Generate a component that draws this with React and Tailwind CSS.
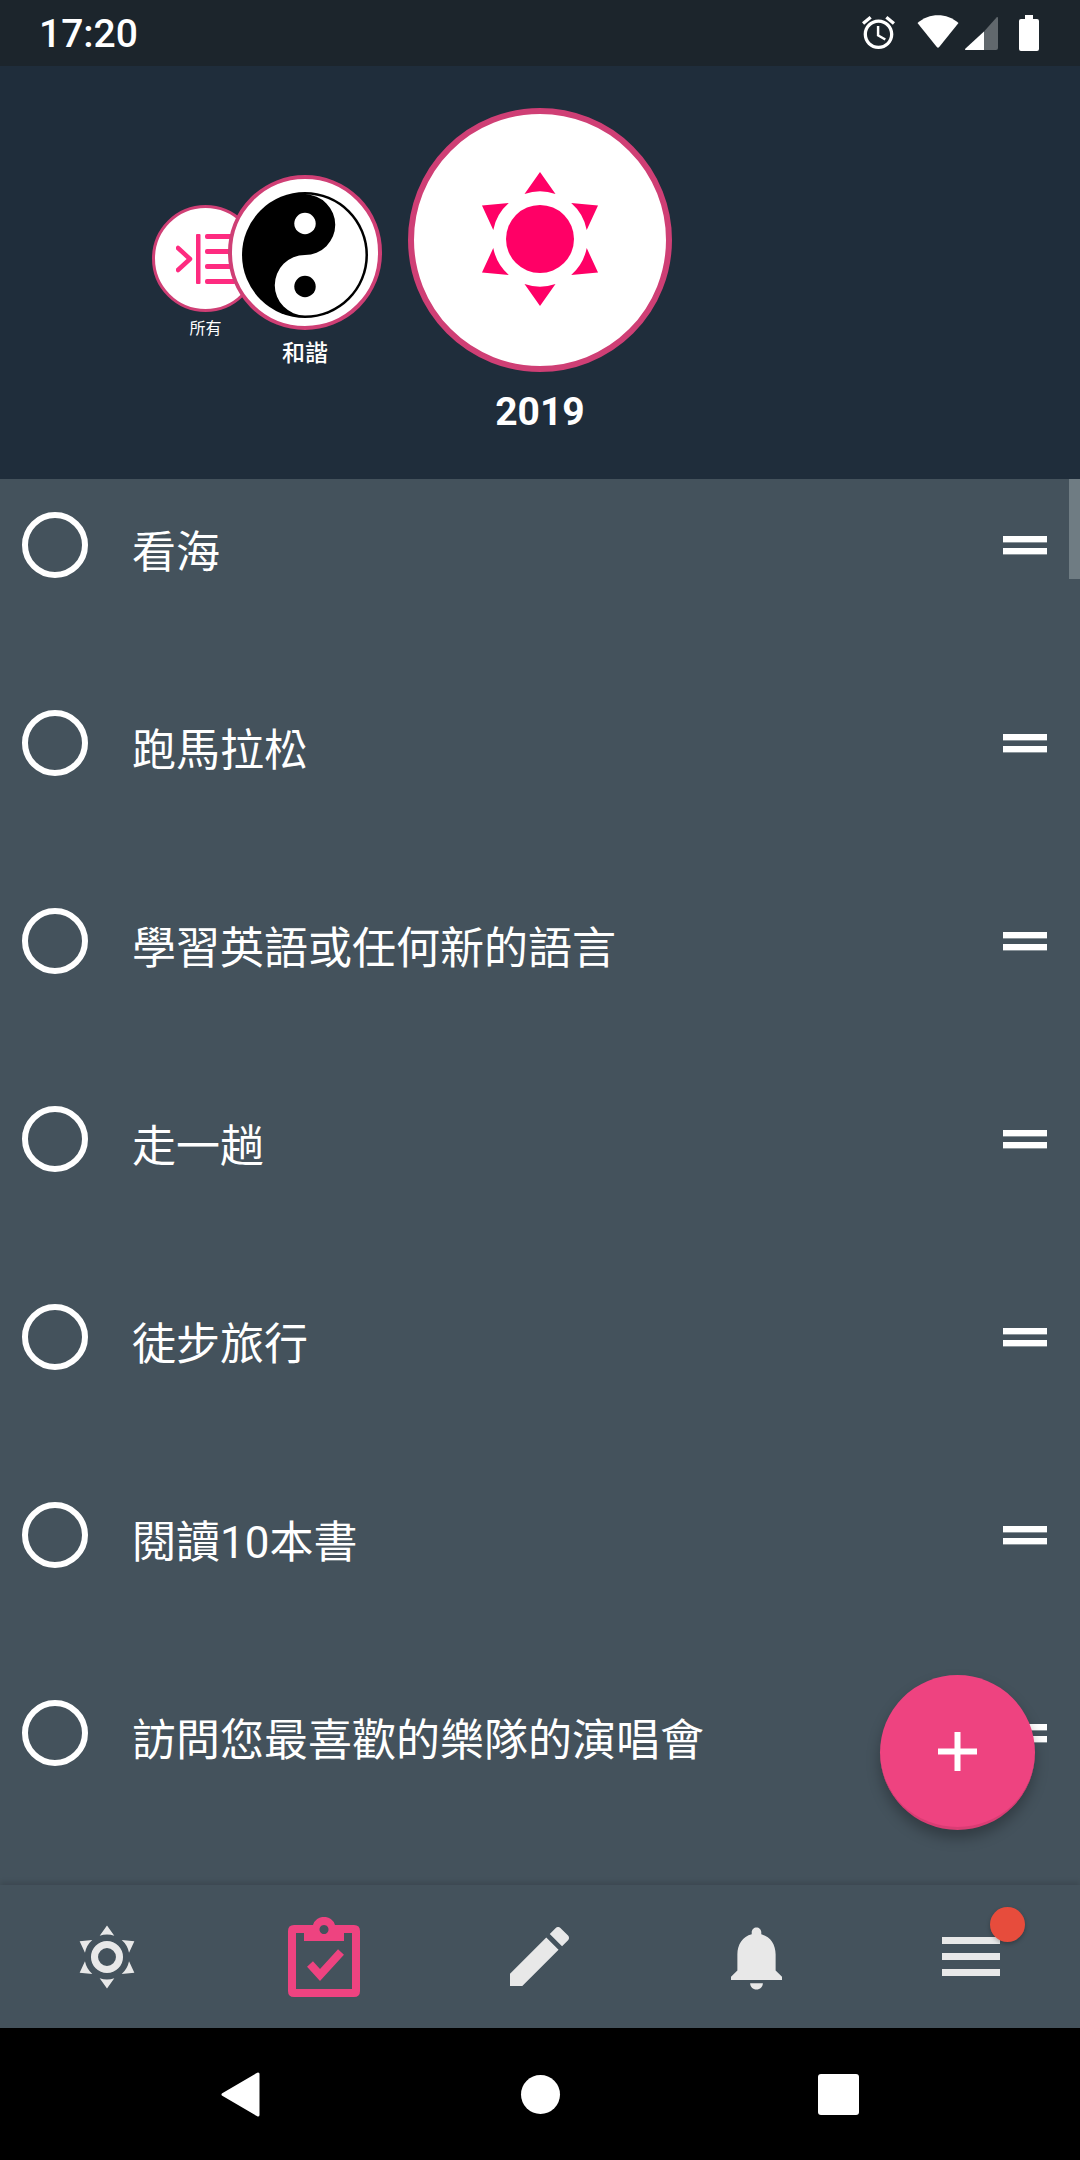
const tasks = [
  '看海',
  '跑馬拉松',
  '學習英語或任何新的語言',
  '走一趟',
  '徒步旅行',
  '閱讀10本書',
  '訪問您最喜歡的樂隊的演唱會',
];

const sunRays = [0, 60, 120, 180, 240, 300];

// six rays around the origin, shared by the big badge and the tab icon
function Rays() {
  return sunRays.map((deg) => (
    <path key={deg} d="M0-67L15.5-45A48 48 0 0 0-15.5-45Z" transform={`rotate(${deg})`} />
  ));
}

function StatusBar() {
  return (
    <div className="flex h-[66px] shrink-0 items-start bg-[#1c252c] pl-[39px] pr-[41px] text-white">
      <span className="mt-[10px] text-[39px] font-medium leading-[48px]">17:20</span>
      <svg viewBox="2 1.86 20 20.14" className="ml-auto mt-[15px] h-[35px] w-[33px]" fill="currentColor">
        <path d="M22 5.72l-4.6-3.86-1.29 1.53 4.6 3.86L22 5.72zM7.88 3.39L6.6 1.86 2 5.71l1.29 1.53 4.59-3.85zM12.5 8H11v6l4.75 2.85.75-1.23-4-2.37V8zM12 4c-4.97 0-9 4.03-9 9s4.02 9 9 9c4.97 0 9-4.03 9-9s-4.03-9-9-9zm0 16c-3.87 0-7-3.13-7-7s3.13-7 7-7 7 3.13 7 7-3.13 7-7 7z" />
      </svg>
      <svg viewBox="0 0 42 33" className="ml-[22px] mt-[15px] h-[33px] w-[42px]" fill="currentColor">
        <path d="M.5 8C12-2.5 30-2.5 41.5 8L22.2 32q-1.2 1.4-2.4 0Z" />
      </svg>
      <svg viewBox="0 0 33 33" className="ml-[6px] mt-[17px] h-[33px] w-[33px]">
        <path d="M19 14.5L31.5.5Q33-.8 33 1.5V31q0 2-2 2H19Z" fill="#61686d" />
        <path d="M19 14.5V33H1.5Q-.8 33 .5 31.5Z" fill="#fff" />
      </svg>
      <svg viewBox="0 0 20 36" className="ml-[21px] mt-[15px] h-9 w-5" fill="currentColor">
        <path d="M6 0h8v4h4q2 0 2 2v28q0 2-2 2H2q-2 0-2-2V6q0-2 2-2h4Z" />
      </svg>
    </div>
  );
}

function CategoryHeader() {
  return (
    <div className="flex h-[413px] shrink-0 items-start bg-[#1f2d3b] pl-[152px] pt-[42px] font-medium text-white">
      <div className="mt-[97px] flex w-[107px] flex-col items-center">
        <div className="flex h-[107px] w-[107px] items-center justify-center rounded-full border-[3px] border-[#cf3f75] bg-white">
          <svg viewBox="0 0 60 50" className="h-[50px] w-[60px]" fill="#fe2b80">
            <path d="M2 14l12 11-12 11" fill="none" stroke="#fe2b80" strokeWidth="4.5" strokeLinecap="round" strokeLinejoin="round" />
            <rect x="20" y="0" width="4.5" height="50" rx="1" />
            <rect x="29" y="0" width="31" height="5" rx="2" />
            <rect x="29" y="15" width="31" height="5" rx="2" />
            <rect x="29" y="30" width="31" height="5" rx="2" />
            <rect x="29" y="45" width="31" height="5" rx="2" />
          </svg>
        </div>
        <span className="mt-[5px] text-[16px] font-normal leading-[24px]">所有</span>
      </div>

      <div className="relative ml-[-31px] mt-[67px] flex w-[154px] flex-col items-center">
        <div className="flex h-[155px] w-[154px] items-center justify-center rounded-full border-4 border-[#cf3f75] bg-white">
          <svg viewBox="-100 -100 200 200" className="mt-[4px] h-[126px] w-[126px]">
            <circle r="100" fill="#000" />
            <path d="M0-96A96 96 0 0 1 0 96A48 48 0 0 1 0 0A48 48 0 0 0 0-96Z" fill="#fff" />
            <circle cy="-50" r="17" fill="#fff" />
            <circle cy="50" r="17" fill="#000" />
          </svg>
        </div>
        <span className="mt-[7px] text-[23px] leading-[34px]">和諧</span>
      </div>

      <div className="ml-[26px] flex w-[264px] flex-col items-center">
        <div className="flex h-[264px] w-[264px] items-center justify-center rounded-full border-[6px] border-[#cf3f75] bg-white">
          <svg viewBox="-70 -70 140 140" className="mb-[3px] h-[140px] w-[140px]" fill="#ff0066">
            <circle r="34" />
            <Rays />
          </svg>
        </div>
        <span className="mt-[17px] text-[39px] font-bold leading-[46px]">2019</span>
      </div>
    </div>
  );
}

function TaskRow({ title }) {
  return (
    <div className="flex h-[198px] items-start pl-[22px] pr-[33px] pt-[33px]">
      <div className="h-[66px] w-[66px] shrink-0 rounded-full border-[6px] border-white" />
      <span className="ml-[44px] mt-[11px] text-[44px] leading-[60px] text-white">{title}</span>
      <div className="ml-auto mt-[24px] flex w-[44px] shrink-0 flex-col gap-[6px]">
        <div className="h-[6px] bg-white shadow-[0_1px_0_#8a949a]" />
        <div className="h-[6px] bg-white shadow-[0_1px_0_#8a949a]" />
      </div>
    </div>
  );
}

function TabBar() {
  return (
    <div className="relative flex h-[143px] shrink-0 bg-[#44525c] shadow-[0_-3px_5px_rgba(0,0,0,0.12)]">
      <div className="flex flex-1 items-center justify-center">
        <svg viewBox="-70 -70 140 140" className="mr-[2px] h-[66px] w-[66px]" fill="#e8e8e8">
          <circle r="26.5" fill="none" stroke="#e8e8e8" strokeWidth="15" />
          <Rays />
        </svg>
      </div>
      <div className="flex flex-1 items-center justify-center">
        <svg viewBox="0 0 72 80" className="h-20 w-[72px]">
          <path
            fillRule="evenodd"
            fill="#ee4380"
            d="M6 8h19a11.500 11.500 0 0 1 22 0h19q6 0 6 6v60q0 6-6 6H6q-6 0-6-6V14q0-6 6-6ZM8 16v56h56V16h-8v8H16v-8ZM36 8a4.500 4.500 0 1 0 .01 0Z"
          />
          <path d="M22 47l10 11 21-23" fill="none" stroke="#ee4380" strokeWidth="8" />
        </svg>
      </div>
      <div className="flex flex-1 items-center justify-center">
        <svg viewBox="3 3 18 18" className="mr-[2px] h-[59px] w-[59px]" fill="#e8e8e8">
          <path d="M3 17.25V21h3.750L17.810 9.940l-3.750-3.750L3 17.250zM20.710 7.040c.39-.39.39-1.020 0-1.410l-2.340-2.340c-.39-.39-1.020-.39-1.410 0l-1.830 1.830 3.750 3.750 1.830-1.830z" />
        </svg>
      </div>
      <div className="flex flex-1 items-center justify-center">
        <svg viewBox="4 2.500 16 19.500" className="mt-[3px] h-[63px] w-[51px]" fill="#e8e8e8">
          <path d="M12 22c1.100 0 2-.9 2-2h-4c0 1.100.89 2 2 2zm6-6v-5c0-3.070-1.640-5.640-4.500-6.320V4c0-.83-.67-1.500-1.500-1.500s-1.500.67-1.500 1.500v.68C7.630 5.360 6 7.920 6 11v5l-2 2v1h16v-1l-2-2z" />
        </svg>
      </div>
      <div className="flex flex-1 items-center justify-center">
        <div className="relative mr-[2px] flex w-[58px] flex-col gap-[9px]">
          <div className="h-[7px] bg-[#e8e8e8]" />
          <div className="h-[7px] bg-[#e8e8e8]" />
          <div className="h-[7px] bg-[#e8e8e8]" />
          <span className="absolute right-[-25px] top-[-30px] h-[35px] w-[35px] rounded-full bg-[#e74c3c] shadow-[0_2px_4px_rgba(0,0,0,0.25)]" />
        </div>
      </div>
    </div>
  );
}

function NavBar() {
  return (
    <div className="grid h-[132px] shrink-0 grid-cols-3 items-center justify-items-center bg-black px-[90px]">
      <svg viewBox="0 0 39 45" className="h-[45px] w-[39px]" fill="#fff">
        <path d="M2 22.500L37 2v41Z" stroke="#fff" strokeWidth="3" strokeLinejoin="round" />
      </svg>
      <div className="h-[39px] w-[39px] rounded-full bg-white" />
      <div className="mr-[4px] h-[41px] w-[41px] rounded-[3px] bg-white" />
    </div>
  );
}

export default function App() {
  return (
    <div
      className="flex h-[2160px] w-[1080px] flex-col overflow-hidden bg-[#44525c]"
      style={{ fontFamily: 'Roboto, "Noto Sans CJK TC", sans-serif' }}
    >
      <StatusBar />
      <CategoryHeader />

      <div className="relative flex-1 overflow-hidden">
        {tasks.map((title) => (
          <TaskRow key={title} title={title} />
        ))}
        <div className="absolute right-0 top-0 h-[100px] w-[11px] bg-[#6f7c83]" />
        <button className="absolute bottom-[55px] right-[45px] flex h-[155px] w-[155px] items-center justify-center rounded-full border-b-[3px] border-b-[#d93d74] bg-[#ee4380] shadow-[0_8px_14px_rgba(0,0,0,0.28)]">
          <svg viewBox="0 0 39 39" className="h-[39px] w-[39px]" fill="#fff">
            <rect x="16.500" width="6" height="39" />
            <rect y="16.500" width="39" height="6" />
          </svg>
        </button>
      </div>

      <TabBar />
      <NavBar />
    </div>
  );
}
